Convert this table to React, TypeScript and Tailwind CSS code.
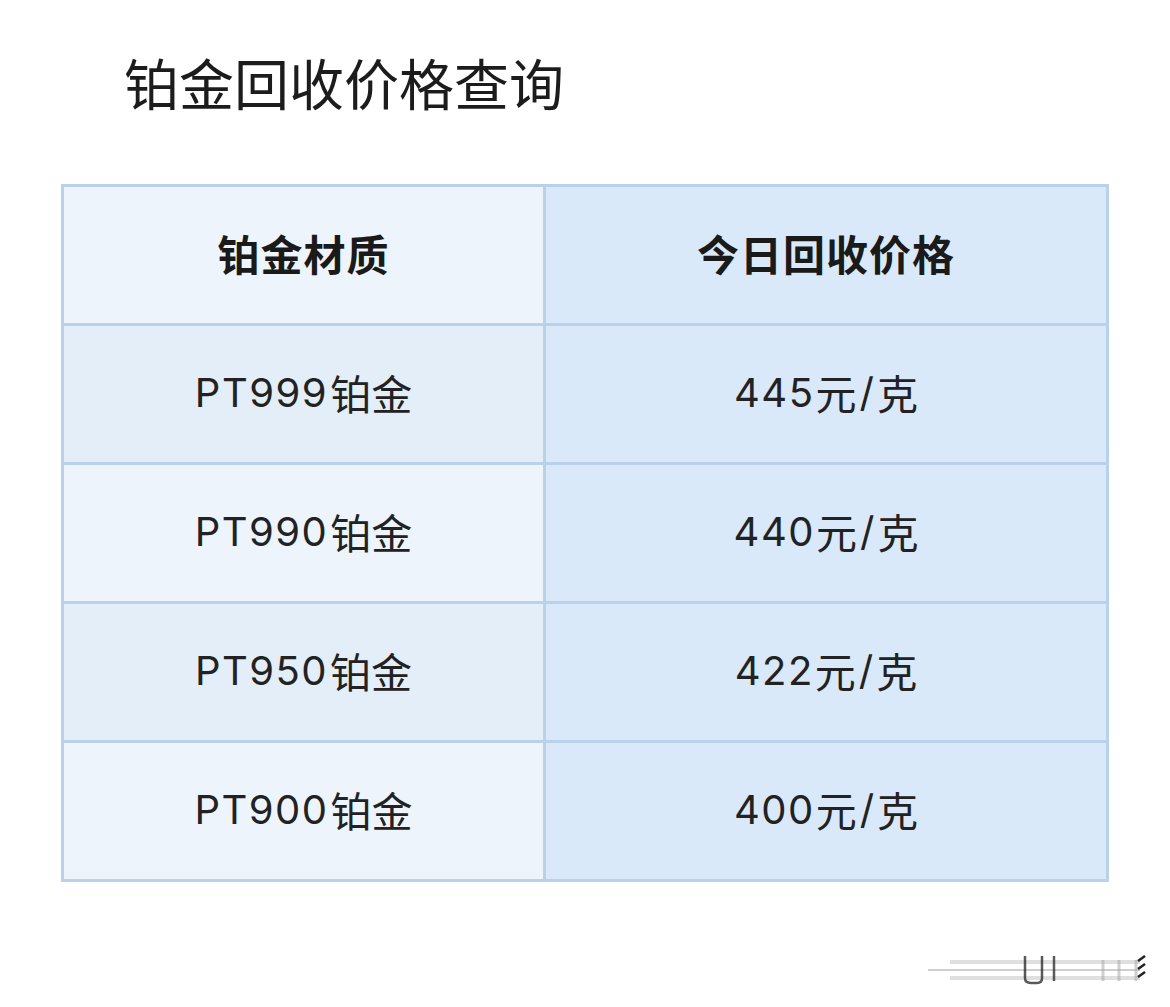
import React from "react";

const rows = [
  { m: "PT999", p: "445", dark: true },
  { m: "PT990", p: "440", dark: false },
  { m: "PT950", p: "422", dark: true },
  { m: "PT900", p: "400", dark: false },
];

const latin = { fontFamily: 'Inter, "Noto Sans CJK SC", sans-serif' };

export default function App() {
  return (
    <div
      className="w-[1170px] h-[1007px] bg-white relative overflow-hidden"
      style={{ fontFamily: '"Noto Sans CJK SC", "Noto Sans", sans-serif' }}
    >
      <div className="pl-[124px] pt-[47px] h-[184px]">
        <h1 className="text-[55px] leading-[68px] text-[#1c1c1c] font-normal">
          铂金回收价格查询
        </h1>
      </div>
      <div className="ml-[61px] w-[1048px] bg-[#b9d2ea] p-[3px] grid grid-cols-[479px_1fr] gap-[3px]">
        <div className="h-[136px] pb-[6px] bg-[#edf4fc] flex items-center justify-center text-[42px] font-bold text-[#1a1a1a] tracking-[1px]">
          铂金材质
        </div>
        <div className="h-[136px] pb-[6px] bg-[#d9e9fa] flex items-center justify-center text-[42px] font-bold text-[#1a1a1a] tracking-[1px]">
          今日回收价格
        </div>
        {rows.map((r) => (
          <React.Fragment key={r.m}>
            <div
              className={`h-[136px] pb-[2px] flex items-center justify-center text-[41px] text-[#222] ${
                r.dark ? "bg-[#e3eef9]" : "bg-[#edf4fc]"
              }`}
            >
              <span style={latin} className="text-[40px] tracking-[1.5px] mr-[2px]">{r.m}</span>
              <span>铂金</span>
            </div>
            <div className="h-[136px] pb-[2px] bg-[#d9e9fa] flex items-center justify-center text-[41px] text-[#222]">
              <span style={latin} className="text-[40px] tracking-[1.5px] mr-[1px]">{r.p}</span>
              <span>元</span>
              <span style={latin} className="text-[40px] px-[3px]">/</span>
              <span>克</span>
            </div>
          </React.Fragment>
        ))}
      </div>
      <svg
        className="absolute left-[925px] top-[950px]"
        width="225"
        height="40"
        viewBox="0 0 225 40"
      >
        <g opacity="0.3" stroke="#999" strokeWidth="4" fill="none">
          <line x1="25" y1="12" x2="215" y2="12" />
          <line x1="25" y1="28" x2="215" y2="28" />
        </g>
        <line x1="3" y1="20" x2="215" y2="20" stroke="#bbb" strokeWidth="2" opacity="0.7" />
        <path d="M100 6 V28 Q100 33 106 33 H112 Q117 33 117 28 V6" stroke="#222" strokeWidth="2.5" fill="none" opacity="0.75" />
        <line x1="129" y1="6" x2="129" y2="31" stroke="#333" strokeWidth="2.5" opacity="0.8" />
        <g stroke="#aaa" strokeWidth="3" opacity="0.55">
          <line x1="178" y1="10" x2="178" y2="31" />
          <line x1="194" y1="10" x2="194" y2="31" />
          <line x1="211" y1="10" x2="211" y2="31" />
        </g>
        <g stroke="#222" strokeWidth="2.5" fill="none">
          <path d="M213 11 L220 6" />
          <path d="M213 19 L220 14" />
          <path d="M213 27 L220 22" />
        </g>
      </svg>
    </div>
  );
}
